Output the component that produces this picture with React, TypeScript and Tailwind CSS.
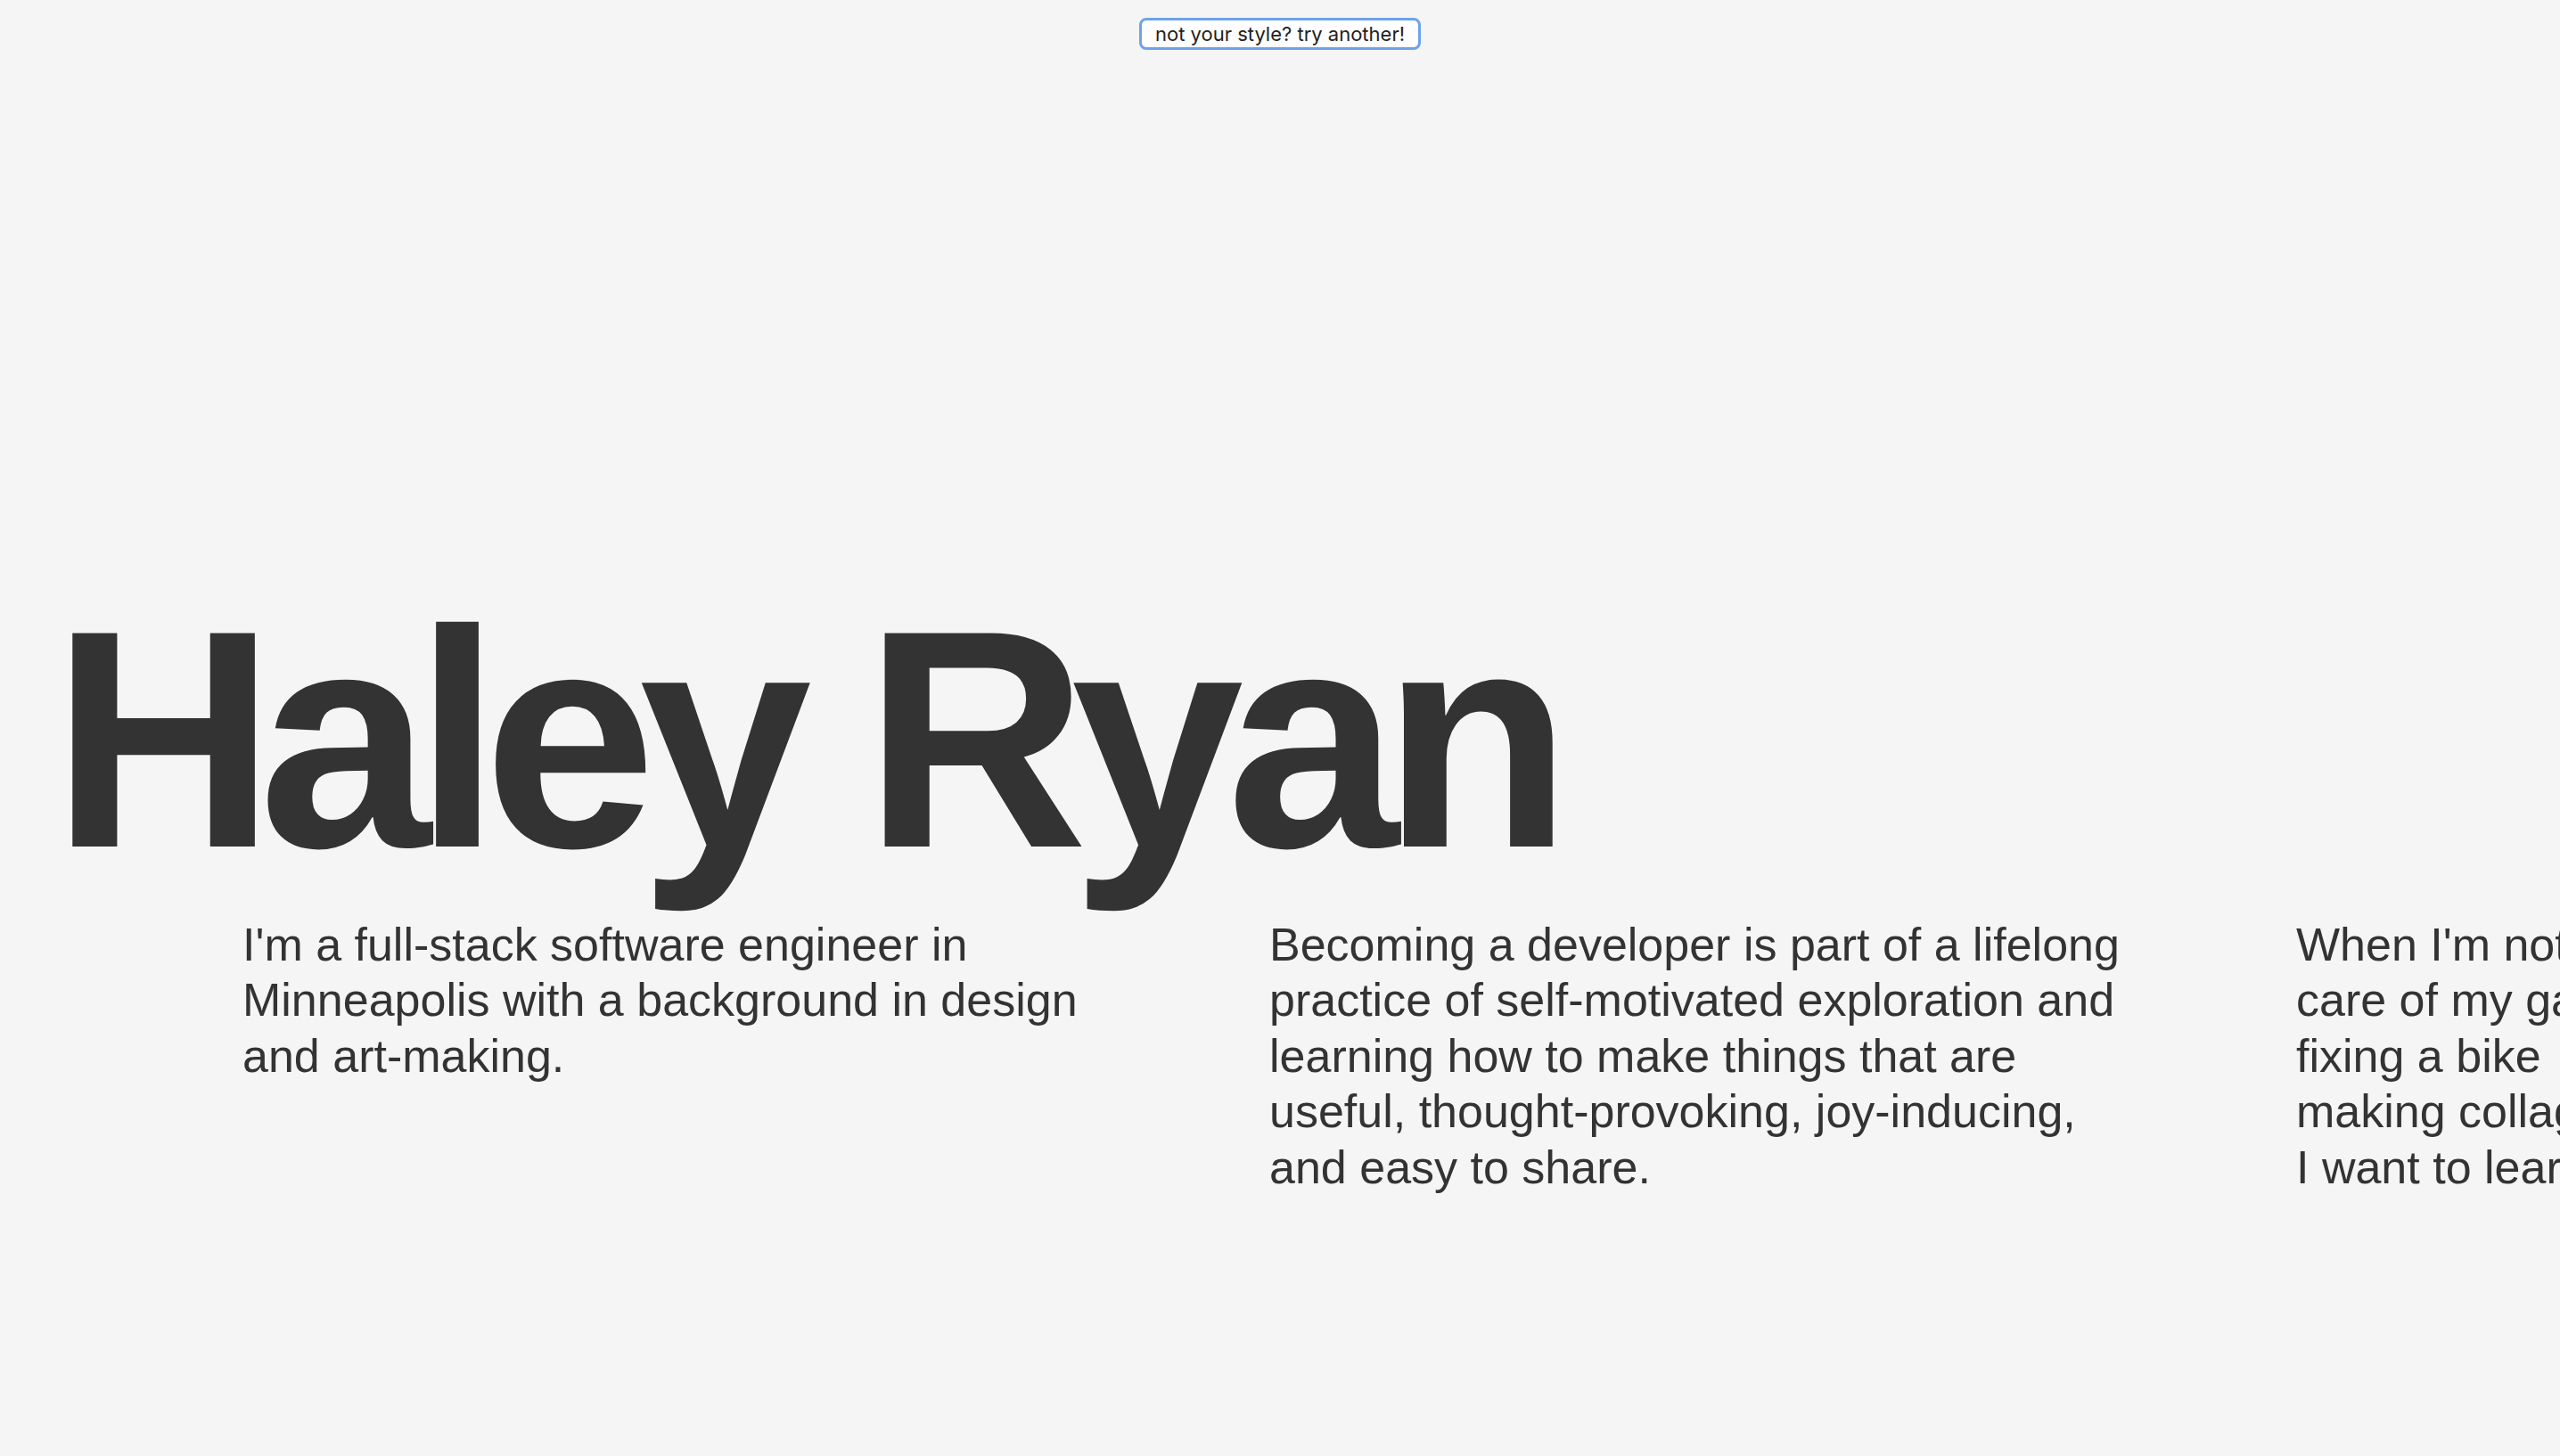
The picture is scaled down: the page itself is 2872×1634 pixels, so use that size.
import React from 'react'

const sans = { fontFamily: '"Liberation Sans", Arial, Helvetica, sans-serif' }

export default function App() {
  return (
    <main
      className="min-h-screen w-full overflow-hidden bg-[#f5f5f5] text-[#333333]"
      style={sans}
    >
      <div className="flex justify-center pt-[20px]">
        <button
          className="h-[36px] px-[15px] bg-white border-[3px] border-[#6ea3ea] rounded-[8px] text-[22px] leading-none text-[#222222]"
          style={{ fontFamily: 'Inter, "Noto Sans", sans-serif' }}
        >
          not your style? try another!
        </button>
      </div>

      <section className="mt-[600px]">
        <h1 className="pl-[58px] whitespace-nowrap text-[348px] leading-none font-bold tracking-[-19px]">
          Haley Ryan
        </h1>

        <div className="mt-[25px] flex gap-[152px] pl-[272px]">
          <p className="w-[1000px] shrink-0 text-[52px] leading-[1.2]">
            I'm a full-stack software engineer in Minneapolis with a background in design and art-making.
          </p>
          <p className="w-[1000px] shrink-0 text-[52px] leading-[1.2]">
            Becoming a developer is part of a lifelong practice of self-motivated exploration and
            learning how to make things that are useful, thought-provoking, joy-inducing, and easy to
            share.
          </p>
          <p className="w-[1000px] shrink-0 text-[52px] leading-[1.2]">
            When I'm not coding, I'm probably taking
            <br />
            care of my garden, cooking a big meal,
            <br />
            fixing a bike
            <br />
            making collages and zines. Wherever I go,
            <br />
            I want to learn how things are made.
          </p>
        </div>
      </section>
    </main>
  )
}
